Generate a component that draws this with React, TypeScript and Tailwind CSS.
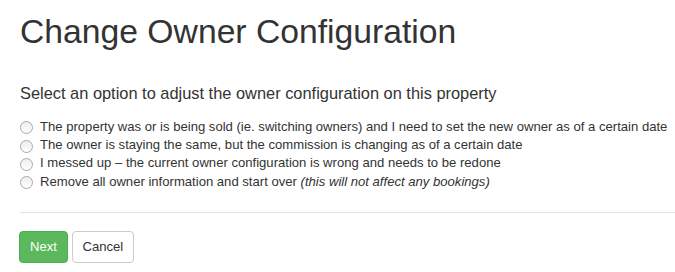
const options = [
  {
    id: "sold",
    label: "The property was or is being sold (ie. switching owners) and I need to set the new owner as of a certain date",
  },
  {
    id: "commission",
    label: "The owner is staying the same, but the commission is changing as of a certain date",
  },
  {
    id: "redo",
    label: "I messed up \u2013 the current owner configuration is wrong and needs to be redone",
  },
  {
    id: "reset",
    label: "Remove all owner information and start over",
    note: "(this will not affect any bookings)",
  },
];

export default function App() {
  return (
    <div className="min-h-[272px] bg-white pl-5 font-['Liberation_Sans',Arial,sans-serif] text-[#333]">
      <h1 className="pt-[13px] text-[33.7px] leading-[37px]">Change Owner Configuration</h1>

      <h4 className="mt-[33.5px] text-[16.4px] leading-[18px]">
        Select an option to adjust the owner configuration on this property
      </h4>

      <div className="mt-[16px] flex flex-col">
        {options.map((option) => (
          <label
            key={option.id}
            className="flex h-[18.4px] items-center gap-[7px] whitespace-nowrap text-[13.1px] leading-[18.4px]"
          >
            <span className="mt-[2px] h-[13px] w-[13px] shrink-0 rounded-full border border-[#a9a9a9] bg-gradient-to-b from-[#ededed] to-white" />
            <span>
              {option.label}
              {option.note && <em className="italic"> {option.note}</em>}
            </span>
          </label>
        ))}
      </div>

      <hr className="mt-[21px] border-t border-[#e3e3e3]" />

      <div className="-ml-px mt-[18px] flex gap-1">
        <button className="h-[32px] rounded-[4px] border border-[#4cae4c] bg-[#5cb85c] px-[10px] text-[13.1px] text-white">
          Next
        </button>
        <button className="h-[32px] rounded-[4px] border border-[#ccc] bg-white px-[9.5px] text-[13.1px] text-[#333]">
          Cancel
        </button>
      </div>
    </div>
  );
}
